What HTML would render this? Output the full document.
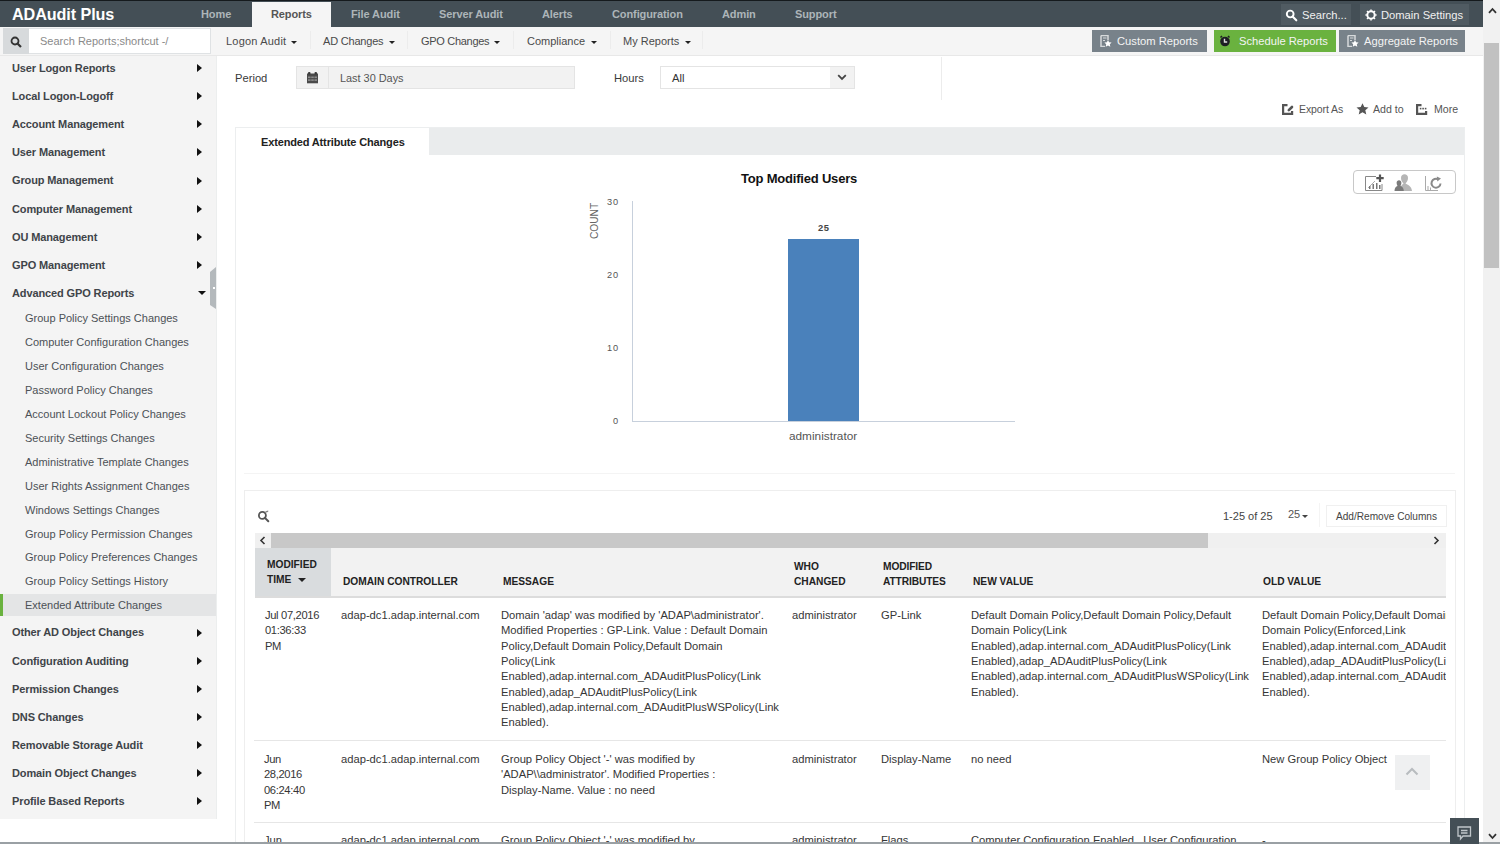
<!DOCTYPE html>
<html><head><meta charset="utf-8">
<style>
*{box-sizing:border-box;margin:0;padding:0}
html,body{width:1500px;height:844px;overflow:hidden;background:#fff;font-family:"Liberation Sans",sans-serif;color:#333}
.a{position:absolute;white-space:nowrap;line-height:16px}
#hdr{position:absolute;left:0;top:0;width:1483px;height:27px;background:#444f56;border-top:1px solid #151a1d}
.nav{position:absolute;top:0;height:26px;line-height:27px;font-size:11px;font-weight:bold;color:#adb5b9;letter-spacing:-0.1px}
#bar2{position:absolute;left:0;top:27px;width:1483px;height:29px;background:#f5f5f5;border-bottom:1px solid #e8e8e8}
.m2{position:absolute;top:0;height:28px;line-height:28px;font-size:11px;color:#4a4a4a}
.sep{position:absolute;top:4px;width:1px;height:18px;background:#ececec}
.btn{position:absolute;top:3px;height:22px;line-height:22px;font-size:11.2px;color:#f4f4f4}
#side{position:absolute;left:0;top:56px;width:217px;height:763px;background:#f4f4f4;border-right:1px solid #eceeee}
.si{position:absolute;left:12px;font-size:11px;font-weight:bold;color:#3f4449;letter-spacing:-0.12px}
.ss{position:absolute;left:25px;font-size:11px;color:#4c5156}
.arr{position:absolute;left:197px;width:0;height:0;border-top:4px solid transparent;border-bottom:4px solid transparent;border-left:5.5px solid #111}
.arrd{position:absolute;left:198px;width:0;height:0;border-left:4px solid transparent;border-right:4px solid transparent;border-top:4.5px solid #111}
#bar2 svg{z-index:2}
.car2{position:absolute;top:14px;width:0;height:0;border-left:3.3px solid transparent;border-right:3.3px solid transparent;border-top:3.3px solid #222}
.car{display:inline-block;width:0;height:0;border-left:3.5px solid transparent;border-right:3.5px solid transparent;border-top:3.5px solid #333;vertical-align:middle;margin-left:5px;margin-top:-1px}
.t{font-size:11.2px;color:#363636}
.th{font-size:10.2px;font-weight:bold;color:#222}
</style></head><body>

<!-- header -->
<div id="hdr">
  <div class="a" style="left:12px;top:4px;font-size:16.2px;font-weight:bold;color:#fff;line-height:18px;letter-spacing:-0.1px">ADAudit Plus</div>
  <div class="nav" style="left:201px">Home</div>
  <div style="position:absolute;left:252px;top:1px;width:79px;height:25px;background:#f5f5f5"></div>
  <div class="nav" style="left:271px;color:#555">Reports</div>
  <div class="nav" style="left:351px">File Audit</div>
  <div class="nav" style="left:439px">Server Audit</div>
  <div class="nav" style="left:542px">Alerts</div>
  <div class="nav" style="left:612px">Configuration</div>
  <div class="nav" style="left:722px">Admin</div>
  <div class="nav" style="left:795px">Support</div>
  <div style="position:absolute;left:1281px;top:3px;width:70px;height:21px;background:#505b62"></div>
  <svg style="position:absolute;left:1285px;top:8px" width="13" height="13" viewBox="0 0 13 13"><circle cx="5.2" cy="5" r="3.4" fill="none" stroke="#fff" stroke-width="1.9"/><path d="M7.6 7.6 L11.3 11.3" stroke="#fff" stroke-width="2.1" stroke-linecap="round"/></svg>
  <div class="a" style="left:1302px;top:6px;font-size:11.2px;color:#f0f0f0">Search...</div>
  <div style="position:absolute;left:1360px;top:3px;width:109px;height:21px;background:#505b62"></div>
  <svg style="position:absolute;left:1365px;top:8px" width="12" height="12" viewBox="0 0 12 12"><circle cx="6" cy="6" r="3.7" fill="none" stroke="#fff" stroke-width="2"/><g stroke="#fff" stroke-width="1.6"><path d="M10.20 6.00 L11.60 6.00"/><path d="M8.97 8.97 L9.96 9.96"/><path d="M6.00 10.20 L6.00 11.60"/><path d="M3.03 8.97 L2.04 9.96"/><path d="M1.80 6.00 L0.40 6.00"/><path d="M3.03 3.03 L2.04 2.04"/><path d="M6.00 1.80 L6.00 0.40"/><path d="M8.97 3.03 L9.96 2.04"/></g></svg>
  <div class="a" style="left:1381px;top:6px;font-size:11.2px;color:#f0f0f0">Domain Settings</div>
</div>

<!-- second bar -->
<div id="bar2">
  <div style="position:absolute;left:3px;top:1px;width:208px;height:26px;background:#fff;border:1px solid #dfe2e4"></div>
  <div style="position:absolute;left:3px;top:1px;width:26px;height:26px;background:#d7dadc"></div>
  <svg style="position:absolute;left:10px;top:9px" width="12" height="12" viewBox="0 0 12 12"><circle cx="5" cy="5" r="3.5" fill="none" stroke="#333" stroke-width="1.8"/><path d="M7.5 7.5 L11 11" stroke="#333" stroke-width="2.2"/></svg>
  <div class="a" style="left:40px;top:6px;font-size:11px;color:#8a8a8a">Search Reports;shortcut -/</div>

  <div class="m2" style="left:226px;letter-spacing:0.2px">Logon Audit</div>
  <div class="sep" style="left:310px"></div>
  <div class="m2" style="left:323px;letter-spacing:-0.2px">AD Changes</div>
  <div class="sep" style="left:407px"></div>
  <div class="m2" style="left:421px;letter-spacing:-0.3px">GPO Changes</div>
  <div class="sep" style="left:513px"></div>
  <div class="m2" style="left:527px">Compliance</div>
  <div class="sep" style="left:610px"></div>
  <div class="m2" style="left:623px">My Reports</div>
  <div class="sep" style="left:702px"></div>

  
  <div class="car2" style="left:291px"></div>
  <div class="car2" style="left:389px"></div>
  <div class="car2" style="left:494px"></div>
  <div class="car2" style="left:591px"></div>
  <div class="car2" style="left:685px"></div>
  <svg style="position:absolute;left:1100px;top:8px" width="12" height="12" viewBox="0 0 12 12"><path d="M1 0.5 H8 V5 M1 0.5 V11.5 H5" fill="none" stroke="#d6d9db" stroke-width="1.5"/><path d="M3 3 H6.5 M3 5.5 H5" stroke="#d6d9db" stroke-width="1"/><path d="M8 5 L9.1 7.3 L11.6 7.6 L9.8 9.3 L10.3 11.8 L8 10.6 L5.7 11.8 L6.2 9.3 L4.4 7.6 L6.9 7.3 Z" fill="#fff"/></svg>
  <svg style="position:absolute;left:1219px;top:8px" width="12" height="12" viewBox="0 0 12 12"><circle cx="6" cy="6.5" r="4.8" fill="#1d1d24"/><path d="M1.5 2.5 L3 1 M10.5 2.5 L9 1" stroke="#1d1d24" stroke-width="1.5"/><path d="M5.5 3.8 V7 H8.2" fill="none" stroke="#ddd" stroke-width="1.4"/></svg>
  <svg style="position:absolute;left:1347px;top:8px" width="12" height="12" viewBox="0 0 12 12"><path d="M1 0.5 H8 V5 M1 0.5 V11.5 H5" fill="none" stroke="#d6d9db" stroke-width="1.5"/><path d="M3 3 H6.5 M3 5.5 H5" stroke="#d6d9db" stroke-width="1"/><path d="M8 5 L9.1 7.3 L11.6 7.6 L9.8 9.3 L10.3 11.8 L8 10.6 L5.7 11.8 L6.2 9.3 L4.4 7.6 L6.9 7.3 Z" fill="#fff"/></svg>

  <div class="btn" style="left:1092px;width:115px;background:#78828a"></div>
  <div class="a" style="left:1117px;top:6px;font-size:11.2px;color:#f4f4f4">Custom Reports</div>
  <div class="btn" style="left:1214px;width:122px;background:#6ab23f"></div>
  <div class="a" style="left:1239px;top:6px;font-size:11.2px;color:#f4f4f4">Schedule Reports</div>
  <div class="btn" style="left:1339px;width:126px;background:#78828a"></div>
  <div class="a" style="left:1364px;top:6px;font-size:11.2px;color:#f4f4f4">Aggregate Reports</div>
</div>

<!-- sidebar -->
<div id="side"></div>
<!--SIDE-->
<div class="a si" style="top:59.8px">User Logon Reports</div>
<div class="arr" style="top:63.9px"></div>
<div class="a si" style="top:87.9px">Local Logon-Logoff</div>
<div class="arr" style="top:92.1px"></div>
<div class="a si" style="top:116.1px">Account Management</div>
<div class="arr" style="top:120.2px"></div>
<div class="a si" style="top:144.3px">User Management</div>
<div class="arr" style="top:148.4px"></div>
<div class="a si" style="top:172.4px">Group Management</div>
<div class="arr" style="top:176.5px"></div>
<div class="a si" style="top:200.6px">Computer Management</div>
<div class="arr" style="top:204.7px"></div>
<div class="a si" style="top:228.7px">OU Management</div>
<div class="arr" style="top:232.9px"></div>
<div class="a si" style="top:256.9px">GPO Management</div>
<div class="arr" style="top:261.0px"></div>
<div class="a si" style="top:285.1px">Advanced GPO Reports</div>
<div class="arrd" style="top:291.4px"></div>
<div class="a ss" style="top:310.4px">Group Policy Settings Changes</div>
<div class="a ss" style="top:334.3px">Computer Configuration Changes</div>
<div class="a ss" style="top:358.2px">User Configuration Changes</div>
<div class="a ss" style="top:382.1px">Password Policy Changes</div>
<div class="a ss" style="top:406.0px">Account Lockout Policy Changes</div>
<div class="a ss" style="top:429.9px">Security Settings Changes</div>
<div class="a ss" style="top:453.8px">Administrative Template Changes</div>
<div class="a ss" style="top:477.7px">User Rights Assignment Changes</div>
<div class="a ss" style="top:501.6px">Windows Settings Changes</div>
<div class="a ss" style="top:525.5px">Group Policy Permission Changes</div>
<div class="a ss" style="top:549.4px">Group Policy Preferences Changes</div>
<div class="a ss" style="top:573.3px">Group Policy Settings History</div>
<div style="position:absolute;left:0;top:594px;width:216px;height:22px;background:#e4e5e6"></div><div style="position:absolute;left:0;top:594px;width:3px;height:22px;background:#6ab23f"></div>
<div class="a ss" style="top:597.2px">Extended Attribute Changes</div>
<div class="a si" style="top:624.4px">Other AD Object Changes</div>
<div class="arr" style="top:628.5px"></div>
<div class="a si" style="top:652.5px">Configuration Auditing</div>
<div class="arr" style="top:656.6px"></div>
<div class="a si" style="top:680.6px">Permission Changes</div>
<div class="arr" style="top:684.7px"></div>
<div class="a si" style="top:708.7px">DNS Changes</div>
<div class="arr" style="top:712.8px"></div>
<div class="a si" style="top:736.8px">Removable Storage Audit</div>
<div class="arr" style="top:740.9px"></div>
<div class="a si" style="top:764.9px">Domain Object Changes</div>
<div class="arr" style="top:769.0px"></div>
<div class="a si" style="top:793.0px">Profile Based Reports</div>
<div class="arr" style="top:797.1px"></div>
<!--/SIDE-->
<div style="position:absolute;left:210px;top:272px;width:6px;height:33px;background:#b4b9bc"></div><div style="position:absolute;left:210px;top:267px;width:0;height:0;border-bottom:5px solid #b4b9bc;border-left:6px solid transparent"></div><div style="position:absolute;left:210px;top:305px;width:0;height:0;border-top:4px solid #b4b9bc;border-left:6px solid transparent"></div><div style="position:absolute;left:213px;top:287px;width:2px;height:2px;background:#fff"></div>

<!-- filter row -->
<div class="a" style="left:235px;top:70px;font-size:11.2px;color:#3a3a3a">Period</div>
<div style="position:absolute;left:296px;top:66px;width:279px;height:23px;background:#f2f2f2;border:1px solid #e4e4e4"></div>
<div style="position:absolute;left:328px;top:67px;width:1px;height:21px;background:#e4e4e4"></div>
<svg style="position:absolute;left:307px;top:72px" width="11" height="12" viewBox="0 0 11 12"><rect x="0" y="1.5" width="11" height="9.8" fill="#4a4a4a"/><rect x="1" y="0" width="2.5" height="2.5" rx="1" fill="#3a3a3a"/><rect x="7.5" y="0" width="2.5" height="2.5" rx="1" fill="#3a3a3a"/><g fill="#8c8c8c"><rect x="1" y="4.5" width="2.6" height="1.6"/><rect x="4.2" y="4.5" width="2.6" height="1.6"/><rect x="7.4" y="4.5" width="2.6" height="1.6"/><rect x="1" y="7.3" width="2.6" height="1.6"/><rect x="4.2" y="7.3" width="2.6" height="1.6"/><rect x="7.4" y="7.3" width="2.6" height="1.6"/></g></svg>
<div class="a" style="left:340px;top:70px;font-size:10.9px;color:#555">Last 30 Days</div>
<div class="a" style="left:614px;top:70px;font-size:11.2px;color:#3a3a3a">Hours</div>
<div style="position:absolute;left:660px;top:66px;width:195px;height:23px;background:#fff;border:1px solid #e4e4e4"></div>
<div style="position:absolute;left:830px;top:67px;width:24px;height:21px;background:#f2f2f2"></div>
<svg style="position:absolute;left:837px;top:74px" width="10" height="7" viewBox="0 0 10 7"><path d="M1.2 1.2 L5 5 L8.8 1.2" fill="none" stroke="#444" stroke-width="1.8"/></svg>
<div class="a" style="left:672px;top:70px;font-size:11.2px;color:#333">All</div>
<div style="position:absolute;left:941px;top:57px;width:1px;height:43px;background:#ececec"></div>

<!-- export row -->
<svg style="position:absolute;left:1282px;top:104px" width="12" height="11" viewBox="0 0 12 11"><path d="M5.5 1.1 H1.1 V9.9 H10.1 V7" fill="none" stroke="#555" stroke-width="2.2"/><path d="M6.8 6.2 L10 3" stroke="#555" stroke-width="2.6" stroke-linecap="round"/></svg>
<div class="a" style="left:1299px;top:101px;font-size:10.5px;letter-spacing:-0.1px;color:#555">Export As</div>
<svg style="position:absolute;left:1356px;top:103px" width="13" height="12" viewBox="0 0 13 12"><path d="M6.5 0.3 L8.3 4.1 L12.5 4.5 L9.3 7.3 L10.3 11.5 L6.5 9.3 L2.7 11.5 L3.7 7.3 L0.5 4.5 L4.7 4.1 Z" fill="#555"/></svg>
<div class="a" style="left:1373px;top:101px;font-size:10.6px;color:#555">Add to</div>
<svg style="position:absolute;left:1416px;top:104px" width="12" height="11" viewBox="0 0 12 11"><path d="M5.5 1.1 H1.1 V9.9 H10.1 V7" fill="none" stroke="#555" stroke-width="2.2"/><rect x="3.8" y="3.8" width="1.6" height="1.6" fill="#555"/><rect x="6.3" y="3.8" width="1.6" height="1.6" fill="#555"/><rect x="8.8" y="3.8" width="1.6" height="1.6" fill="#555"/></svg>
<div class="a" style="left:1434px;top:101px;font-size:10.6px;color:#555">More</div>

<!-- tab container -->
<div style="position:absolute;left:235px;top:127px;width:1230px;height:720px;border:1px solid #eceeef;background:#fff"></div>
<div style="position:absolute;left:236px;top:128px;width:1228px;height:27px;background:#eaeced"></div>
<div style="position:absolute;left:236px;top:128px;width:193px;height:28px;background:#fff"></div>
<div class="a" style="left:261px;top:134px;font-size:11px;font-weight:bold;color:#222;letter-spacing:-0.15px">Extended Attribute Changes</div>

<!-- chart -->
<div class="a" style="left:741px;top:171px;font-size:13px;font-weight:bold;color:#111;letter-spacing:-0.2px">Top Modified Users</div>
<div style="position:absolute;left:632px;top:201px;width:1px;height:221px;background:#c7d0dc"></div>
<div style="position:absolute;left:632px;top:421px;width:383px;height:1px;background:#c7d0dc"></div>
<div style="position:absolute;left:788px;top:239px;width:71px;height:182px;background:#4a81bb"></div>
<div class="a" style="left:607px;top:193.5px;font-size:9.2px;color:#555;letter-spacing:0.9px">30</div>
<div class="a" style="left:607px;top:266.5px;font-size:9.2px;color:#555;letter-spacing:0.9px">20</div>
<div class="a" style="left:607px;top:340px;font-size:9.2px;color:#555;letter-spacing:0.9px">10</div>
<div class="a" style="left:613px;top:412.5px;font-size:9.2px;color:#555">0</div>
<div class="a" style="left:818px;top:220px;font-size:9.4px;font-weight:bold;color:#444;letter-spacing:0.6px">25</div>
<div class="a" style="left:789px;top:428px;font-size:11.8px;color:#555">administrator</div>
<div class="a" style="left:576px;top:213px;font-size:10.2px;color:#666;transform:rotate(-90deg);transform-origin:center;width:38px;text-align:center">COUNT</div>

<!-- chart tools -->
<div style="position:absolute;left:1353px;top:170px;width:103px;height:24px;border:1px solid #c8c8c8;border-radius:4px"></div>
<svg style="position:absolute;left:1365px;top:174px" width="20" height="17" viewBox="0 0 20 17"><path d="M0.5 2.5 V16.5 H17" fill="none" stroke="#888" stroke-width="1"/><path d="M0.5 2.5 H11" stroke="#888" stroke-width="1"/><path d="M17 10 V16.5" stroke="#888" stroke-width="1"/><path d="M3 14 L10 7" stroke="#999" stroke-width="0.8"/><rect x="4" y="12" width="1.5" height="3" fill="#777"/><rect x="7.5" y="10" width="1.5" height="5" fill="#777"/><rect x="11" y="9" width="1.5" height="6" fill="#777"/><rect x="14" y="11" width="1.5" height="4" fill="#777"/><path d="M15 0.5 V8 M11.3 4.2 H18.7" stroke="#555" stroke-width="2.2"/></svg>
<svg style="position:absolute;left:1394px;top:174px" width="19" height="17" viewBox="0 0 19 17"><path d="M6 17 C6.5 12 8 10.5 9.5 9.5 C8 8 7 6 7 4 C7 1.5 8.5 0.3 10.5 0.3 C12.5 0.3 14 1.5 14 4 C14 6 13 8 11.5 9.5 C13.5 10.5 17.5 12 18 17 Z" fill="#b5b5b5"/><path d="M0.5 17 C0.5 14 2 12.5 3.5 12 C2.8 11 2.6 9.8 2.6 8.8 C2.6 7 3.6 6.2 5 6.2 C6.4 6.2 7.4 7 7.4 8.8 C7.4 9.8 7.2 11 6.5 12 C8 12.5 9.8 14 9.8 17 Z" fill="#7a7a7a"/></svg>
<svg style="position:absolute;left:1425px;top:174px" width="17" height="17" viewBox="0 0 17 17"><path d="M0.5 2 V16.5 H13" fill="none" stroke="#aaa" stroke-width="1"/><rect x="2.5" y="12" width="1" height="4" fill="#aaa"/><rect x="5" y="13.5" width="1" height="2.5" fill="#aaa"/><path d="M15.5 9.5 A4.5 4.5 0 1 1 13.2 5.3" fill="none" stroke="#8a8a8a" stroke-width="2"/><path d="M11.8 2.5 L16 4.6 L12.3 7.6 Z" fill="#8a8a8a"/></svg>

<!-- separator -->
<div style="position:absolute;left:244px;top:473px;width:1211px;height:1px;background:#f4f4f4"></div>

<!-- table panel -->
<div style="position:absolute;left:244px;top:490px;width:1212px;height:360px;border:1px solid #eeeeee"></div>
<svg style="position:absolute;left:257px;top:510px" width="14" height="13" viewBox="0 0 14 13"><circle cx="5.4" cy="5.4" r="3.5" fill="none" stroke="#555" stroke-width="1.8"/><path d="M7.9 7.9 L11.3 11.3" stroke="#555" stroke-width="2" stroke-linecap="round"/><path d="M8.2 2.6 Q9.5 1.2 11.2 1.2" fill="none" stroke="#888" stroke-width="1.4"/></svg>
<div class="a" style="left:1223px;top:508px;font-size:11px;color:#444">1-25 of 25</div>
<div class="a" style="left:1288px;top:506px;font-size:11px;color:#555">25</div>
<div style="position:absolute;left:1302px;top:515px;width:0;height:0;border-left:3.5px solid transparent;border-right:3.5px solid transparent;border-top:3.5px solid #444"></div>
<div style="position:absolute;left:1319px;top:503px;width:1px;height:24px;background:#f4f4f4"></div>
<div style="position:absolute;left:1326px;top:505px;width:121px;height:22px;border:1px solid #f0f0f0;background:#fff"></div>
<div class="a" style="left:1336px;top:509px;font-size:10.1px;color:#444">Add/Remove Columns</div>

<!-- h scroll -->
<div style="position:absolute;left:255px;top:533px;width:1191px;height:15px;background:#f0f0f0"></div>
<div style="position:absolute;left:271px;top:533px;width:937px;height:15px;background:#c8c8c8"></div>
<svg style="position:absolute;left:259px;top:536px" width="7" height="9" viewBox="0 0 7 9"><path d="M5.5 1 L2 4.5 L5.5 8" fill="none" stroke="#333" stroke-width="1.6"/></svg>
<svg style="position:absolute;left:1433px;top:536px" width="7" height="9" viewBox="0 0 7 9"><path d="M1.5 1 L5 4.5 L1.5 8" fill="none" stroke="#333" stroke-width="1.6"/></svg>

<!-- table header -->
<div style="position:absolute;left:255px;top:548px;width:1191px;height:48px;background:#f2f2f2"></div>
<div style="position:absolute;left:255px;top:548px;width:76px;height:48px;background:#d9dcde"></div>
<div style="position:absolute;left:255px;top:596px;width:1191px;height:2px;background:#dcdcdc"></div>
<div class="a th" style="left:267px;top:557px;line-height:15.4px">MODIFIED<br>TIME</div>
<div style="position:absolute;left:298px;top:578px;width:0;height:0;border-left:4px solid transparent;border-right:4px solid transparent;border-top:4px solid #222"></div>
<div class="a th" style="left:343px;top:573.5px">DOMAIN CONTROLLER</div>
<div class="a th" style="left:503px;top:573.5px">MESSAGE</div>
<div class="a th" style="left:794px;top:559px;line-height:15.4px">WHO<br>CHANGED</div>
<div class="a th" style="left:883px;top:559px;line-height:15.4px;letter-spacing:-0.1px">MODIFIED<br>ATTRIBUTES</div>
<div class="a th" style="left:973px;top:573.5px">NEW VALUE</div>
<div class="a th" style="left:1263px;top:573.5px">OLD VALUE</div>

<!-- rows -->
<div class="a t" style="left:265px;top:608px;line-height:15.33px;letter-spacing:-0.35px">Jul 07,2016<br>01:36:33<br>PM</div>
<div class="a t" style="left:341px;top:608px;line-height:15.33px">adap-dc1.adap.internal.com</div>
<div class="a t" style="left:501px;top:608px;line-height:15.33px">Domain 'adap' was modified by 'ADAP\administrator'.<br>Modified Properties : GP-Link. Value : Default Domain<br>Policy,Default Domain Policy,Default Domain<br>Policy(Link<br>Enabled),adap.internal.com_ADAuditPlusPolicy(Link<br>Enabled),adap_ADAuditPlusPolicy(Link<br>Enabled),adap.internal.com_ADAuditPlusWSPolicy(Link<br>Enabled).</div>
<div class="a t" style="left:792px;top:608px;line-height:15.33px">administrator</div>
<div class="a t" style="left:881px;top:608px;line-height:15.33px">GP-Link</div>
<div class="a t" style="left:971px;top:608px;line-height:15.33px">Default Domain Policy,Default Domain Policy,Default<br>Domain Policy(Link<br>Enabled),adap.internal.com_ADAuditPlusPolicy(Link<br>Enabled),adap_ADAuditPlusPolicy(Link<br>Enabled),adap.internal.com_ADAuditPlusWSPolicy(Link<br>Enabled).</div>
<div style="position:absolute;left:1262px;top:600px;width:184px;height:240px;overflow:hidden"><div class="a t" style="left:0;top:8px;line-height:15.33px">Default Domain Policy,Default Domain Policy,Default<br>Domain Policy(Enforced,Link<br>Enabled),adap.internal.com_ADAuditPlusPolicy(Link<br>Enabled),adap_ADAuditPlusPolicy(Link<br>Enabled),adap.internal.com_ADAuditPlusWSPolicy(Link<br>Enabled).</div></div>
<div style="position:absolute;left:254px;top:740px;width:1192px;height:1px;background:#e6e6e6"></div>

<div class="a t" style="left:264px;top:752px;line-height:15.33px;letter-spacing:-0.35px">Jun<br>28,2016<br>06:24:40<br>PM</div>
<div class="a t" style="left:341px;top:752px;line-height:15.33px">adap-dc1.adap.internal.com</div>
<div class="a t" style="left:501px;top:752px;line-height:15.33px">Group Policy Object '-' was modified by<br>'ADAP\\administrator'. Modified Properties :<br>Display-Name. Value : no need</div>
<div class="a t" style="left:792px;top:752px;line-height:15.33px">administrator</div>
<div class="a t" style="left:881px;top:752px;line-height:15.33px">Display-Name</div>
<div class="a t" style="left:971px;top:752px;line-height:15.33px">no need</div>
<div class="a t" style="left:1262px;top:752px;line-height:15.33px">New Group Policy Object</div>
<div style="position:absolute;left:254px;top:822px;width:1192px;height:1px;background:#e6e6e6"></div>

<div class="a t" style="left:264px;top:833px;line-height:15.33px">Jun</div>
<div class="a t" style="left:341px;top:833px;line-height:15.33px">adap-dc1.adap.internal.com</div>
<div class="a t" style="left:501px;top:833px;line-height:15.33px">Group Policy Object '-' was modified by</div>
<div class="a t" style="left:792px;top:833px;line-height:15.33px">administrator</div>
<div class="a t" style="left:881px;top:833px;line-height:15.33px">Flags</div>
<div class="a t" style="left:971px;top:833px;line-height:15.33px">Computer Configuration Enabled , User Configuration</div>
<div class="a t" style="left:1262px;top:833px;line-height:15.33px">-</div>

<!-- back to top -->
<div style="position:absolute;left:1395px;top:755px;width:35px;height:35px;background:#eff0f1"></div>
<svg style="position:absolute;left:1405px;top:767px" width="14" height="9" viewBox="0 0 14 9"><path d="M1.5 7.5 L7 2 L12.5 7.5" fill="none" stroke="#b8bcbf" stroke-width="2"/></svg>

<!-- feedback -->
<div style="position:absolute;left:1450px;top:818px;width:29px;height:26px;background:#444f56;z-index:3"></div>
<svg style="position:absolute;left:1457px;top:826px;z-index:4" width="15" height="15" viewBox="0 0 15 15"><path d="M1 1 H13.5 V10 H6 L3.5 13 V10 H1 Z" fill="none" stroke="#c0c6ca" stroke-width="1.3"/><path d="M4 4.5 H10.5 M4 7 H10.5" stroke="#c0c6ca" stroke-width="1.3"/></svg>

<!-- scrollbar -->
<div style="position:absolute;left:1483px;top:0;width:17px;height:844px;background:#f1f1f1"></div>
<div style="position:absolute;left:1484px;top:43px;width:15px;height:225px;background:#c1c1c1"></div>

<!-- bottom line -->
<div style="position:absolute;left:0;top:842px;width:1500px;height:2px;background:#9aa0a4"></div>
<svg style="position:absolute;left:1488px;top:7px" width="9" height="7" viewBox="0 0 9 7"><path d="M1 5.8 L4.5 2 L8 5.8" fill="none" stroke="#333" stroke-width="1.8"/></svg>
<svg style="position:absolute;left:1488px;top:833px" width="9" height="7" viewBox="0 0 9 7"><path d="M1 1.2 L4.5 5 L8 1.2" fill="none" stroke="#333" stroke-width="1.8"/></svg>

</body></html>
